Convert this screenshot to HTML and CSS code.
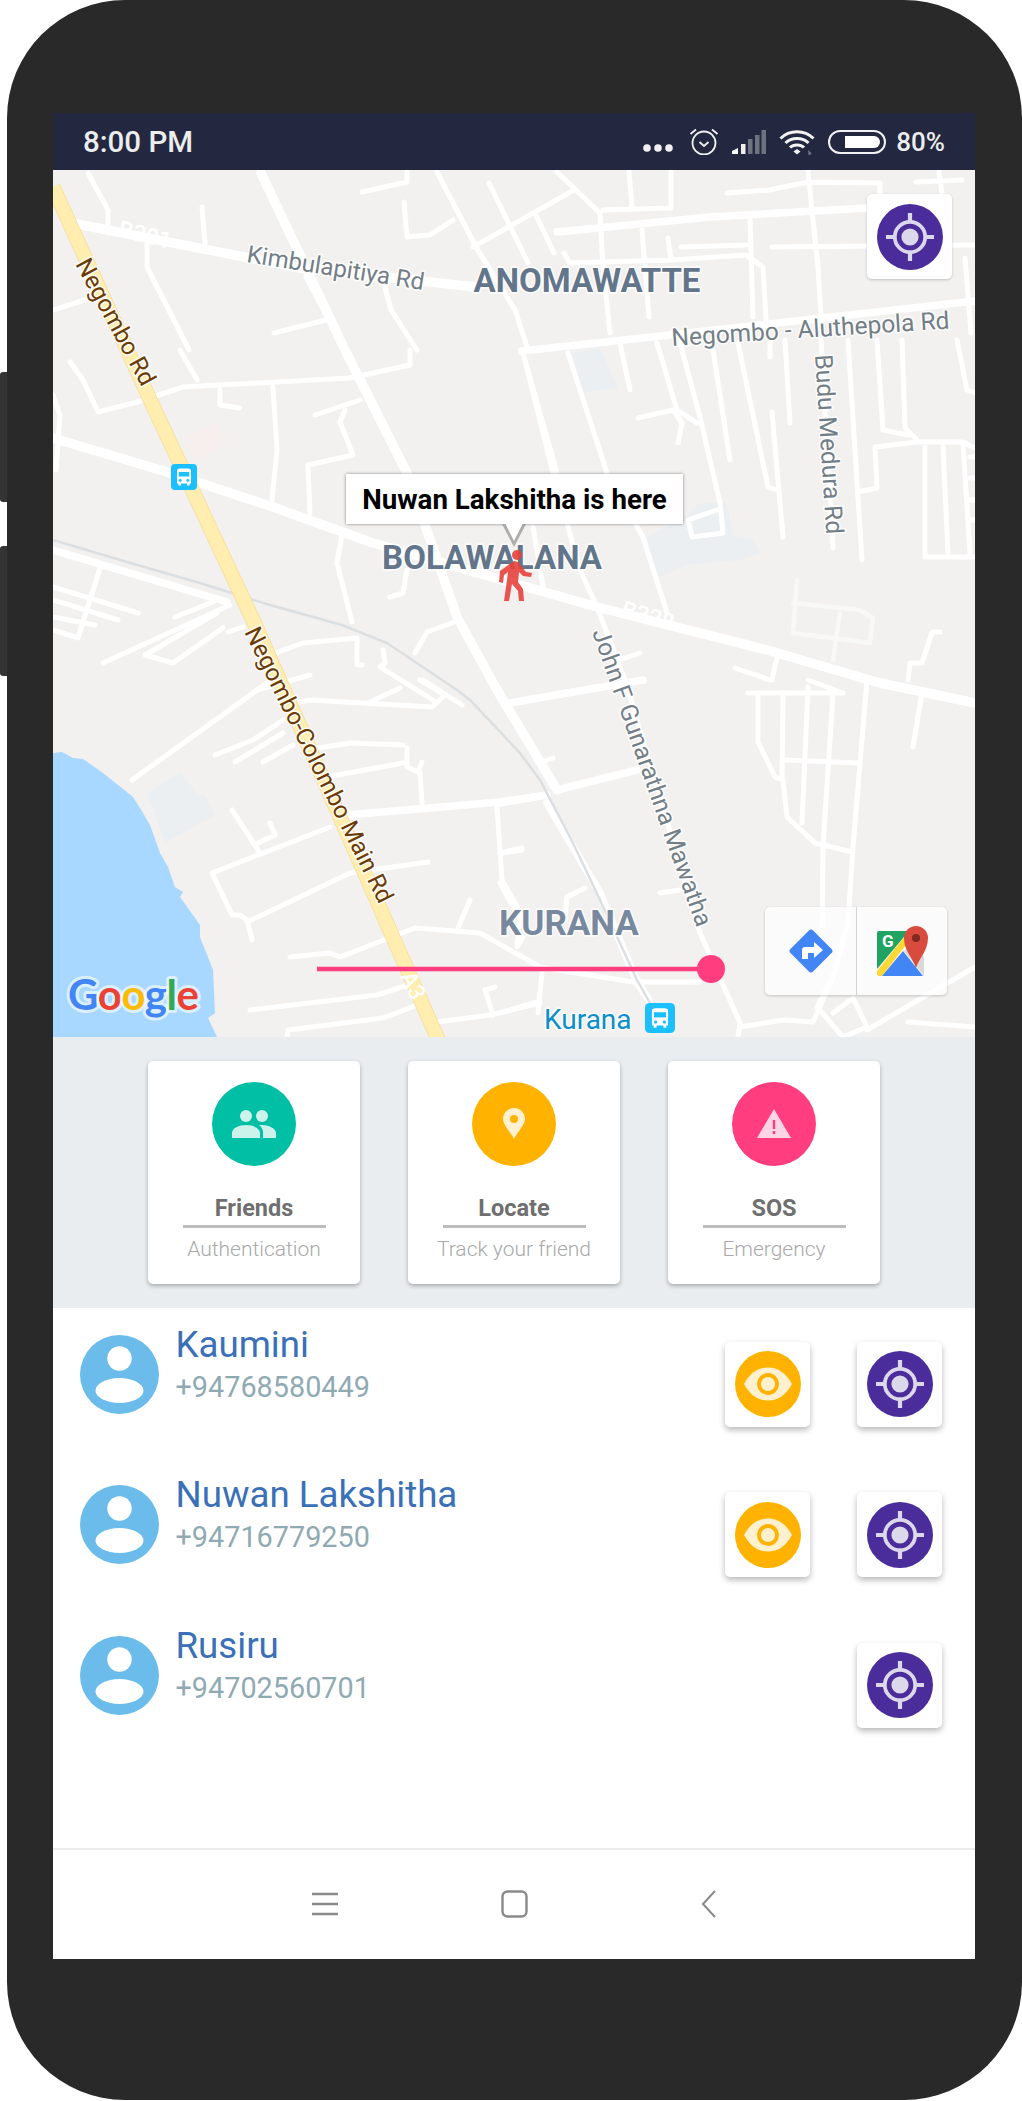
FILE: index.html
```html
<!DOCTYPE html>
<html lang="en">
<head>
<meta charset="utf-8">
<title>Friend locator</title>
<link rel="stylesheet" href="styles.css">
</head>
<body>
<svg class="defs" width="0" height="0" aria-hidden="true">
  <symbol id="target" viewBox="0 0 66 66">
    <circle cx="33" cy="33" r="33" fill="#4a2c9b"/>
    <circle cx="33" cy="33" r="15.2" fill="none" stroke="#dcd7ea" stroke-width="3.8"/>
    <circle cx="33" cy="33" r="8.6" fill="#dcd7ea"/>
    <path d="M33 9v8M33 49v8M9 33h8M49 33h8" stroke="#dcd7ea" stroke-width="4.2" fill="none"/>
  </symbol>
  <symbol id="eye" viewBox="0 0 66 66">
    <circle cx="33" cy="33" r="33" fill="#ffb300"/>
    <path d="M9 33C15 22 23 16.500 33 16.500S51 22 57 33C51 44 43 49.500 33 49.500S15 44 9 33Z" fill="#fff1cf"/>
    <circle cx="33" cy="33" r="9" fill="none" stroke="#ffb300" stroke-width="3.800"/>
  </symbol>
  <symbol id="person" viewBox="0 0 79 79">
    <circle cx="39.500" cy="39.500" r="39.500" fill="#6bbceb"/>
    <circle cx="39.500" cy="23.500" r="12.200" fill="#fff"/>
    <ellipse cx="39.500" cy="55.500" rx="24" ry="12.500" fill="#fff"/>
  </symbol>
  <symbol id="bus" viewBox="0 0 26 26">
    <rect width="26" height="26" rx="4" fill="#1cc0ff"/>
    <path d="M6 7q0-2.500 3-2.500h8q3 0 3 2.500v12.500h-1.500v2h-2.500v-2h-6v2h-2.500v-2h-1.500Z" fill="#fff"/>
    <rect x="7.800" y="8" width="10.400" height="4.500" fill="#1cc0ff"/>
    <circle cx="9.200" cy="16.500" r="1.400" fill="#1cc0ff"/>
    <circle cx="16.800" cy="16.500" r="1.400" fill="#1cc0ff"/>
  </symbol>
</svg>

<div class="phone">
  <span class="side-key side-key-top"></span>
  <span class="side-key side-key-low"></span>
  <main class="screen">
    <header class="status">
      <span class="clock">8:00 PM</span>
      <div class="status-icons">
        <svg class="st-dots" width="30" height="8" viewBox="0 0 30 8"><circle cx="4" cy="4" r="3.800"/><circle cx="15" cy="4" r="3.800"/><circle cx="26" cy="4" r="3.800"/></svg>
        <svg class="st-alarm" width="30" height="28" viewBox="0 0 30 28"><circle cx="15" cy="16" r="11.500" fill="none" stroke="#f0f0f2" stroke-width="1.800"/><path d="M10.500 15l4.500 4 4.500-4M1.500 7L7 2.500M28.500 7L23 2.500" fill="none" stroke="#f0f0f2" stroke-width="1.800"/></svg>
        <svg class="st-signal" width="34" height="24" viewBox="0 0 34 24"><path d="M0 24v-3l6-3v6Z" fill="#fff"/><rect x="9" y="14" width="4.500" height="10" fill="#eee"/><rect x="16" y="9" width="4.500" height="15" fill="#6f7280"/><rect x="23" y="5" width="4.500" height="19" fill="#6f7280"/><rect x="29.500" y="0" width="4.500" height="24" fill="#6f7280"/></svg>
        <svg class="st-wifi" width="36" height="26" viewBox="0 0 36 26"><path d="M1.500 9.500C10.500 .5 25.500 .5 34.500 9.500M6.500 14C12.500 8 23.500 8 29.500 14M11 18.500C14.500 15 21.500 15 25 18.500" fill="none" stroke="#f2f2f4" stroke-width="3"/><path d="M14.500 22.500l3.500-2.500 3.500 2.500-3.500 3Z" fill="#f2f2f4"/><path d="M29 21l4 3.500-1.500.2v2h-2Z" fill="#6f7280"/></svg>
        <span class="st-battery"><span class="st-level"></span></span>
        <span class="pct">80%</span>
      </div>
    </header>

    <section class="map">
      <svg class="map-art" viewBox="53 170 922 867" width="922" height="867">
        <path class="water" d="M53 753L62 752 73 758 83 759 103 773 133 797 143 813 150 825 160 853 168 867 175 887 183 892 180 897 200 925 200 937 213 970 215 1013 208 1018 217 1037H53Z"/>
        <path class="pale" d="M147 793L180 772 198 795 205 795 215 815 165 843Z"/>
        <path class="pale" d="M572 353L600 348 618 388 583 392Z"/>
        <path class="pale" d="M647 537L687 515 700 503 727 503 733 535 753 540 760 553 740 560 687 565 657 578Z"/>
        <path class="pink" d="M183 437L220 422 223 445 195 460Z"/>

        <g class="road r-faint">
          <path d="M797 580L793 633 870 643 873 618 860 610 793 603M840 613L833 660"/>
        </g>
        <g class="road r-thin">
          <path d="M362 192L407 182 407 172M404 202L407 237 430 235 453 220M202 207L205 243M88 173L108 210 108 233M147 243L147 267 189 350M274 333L326 320M53 310L85 300M306 277L345 350M385 287L391 310 417 350"/>
          <path d="M437 172L476 247 515 310 528 350M557 172L600 213 603 267 610 333M574 190L473 247M489 183L528 263M535 213L554 253"/>
          <path d="M629 172L632 207M671 172L671 208 603 210M727 193L769 190 808 182 880 183 880 210M808 172L818 267 821 317M750 220L753 317M642 230L649 317M668 238L671 260M681 247L746 245M564 253L570 263 671 260 746 255 763 267 766 320M772 247L975 245M916 182L962 180M939 172L942 193M965 258L971 333"/>
          <path d="M70 362L83 380 98 412 137 402 183 387 350 378 410 365 410 350M180 350L197 380M220 390L220 405 240 408M273 387L277 450 272 500M315 415L360 400M345 410L340 422 353 455 308 465 310 513M342 535L337 563 352 622M407 570L403 593 390 597"/>
          <path d="M53 395L60 415 56 470M100 568L78 638 53 630M53 587L138 613M53 600L118 620M53 617L95 625M175 617L213 602M103 663L230 605M145 655L173 663 223 628M145 655L217 613M228 632L243 627M270 655L303 643 357 638 357 665 362 665M257 690L310 675M415 653L427 632 460 620M383 650L385 663 380 667 433 700"/>
          <path d="M132 780L267 683M215 755L253 740 283 720M235 762L283 733M263 762L293 745M293 703L310 700 432 707 445 695 420 680M368 703L400 688M423 680L462 705M317 748L352 743 403 745M407 748L407 767 418 772 422 762M327 777L403 763M420 772L422 803M497 808L502 880 523 917M502 853L522 850M232 810L260 853M270 823L275 835 258 843M212 873L330 827M212 873L232 915 240 915 247 920 252 940M247 922L350 873 428 862M290 957L330 953 340 957 415 928 480 933 540 967 633 982 700 982M470 900L458 928M517 947L523 937M250 1010L377 995 417 982M287 1037L288 1030 383 1018 417 1005M437 1022L490 1015 540 1003M485 990L493 1015M485 990L495 987"/>
          <path d="M620 343L630 390M657 343L677 410 697 423M680 343L700 417 720 503 723 533 692 537 688 520 717 510M638 418L673 410 682 423 678 443M713 350L730 460M738 343L768 487 777 490M772 412L783 537M770 343L770 357M785 340L790 423M821 340L833 548M848 340L862 560M877 340L883 430 908 435M902 340L905 428 917 440M875 447L877 488 858 492M875 447L917 442 963 442 975 448M925 447L925 557 975 557M943 447L948 553M963 443L970 553M970 457H975M970 478H975M970 500H975M970 520H975M957 340L967 390 975 393M940 632L932 632 922 663 910 663 908 680M777 657L772 680M735 668L770 680M640 653L613 662"/>
          <path d="M540 763L553 758M500 853L522 848M500 883L520 920 517 943M565 920L567 897 585 888M542 973L538 1013M500 1013L537 1002M640 983L657 1013M740 1027L783 1020 813 1022 833 977M817 1007L843 1037M833 1013L853 998 867 1027 843 1037M867 1030L975 967M908 1022L975 1027M660 893L680 890M748 693L843 693M808 680L843 693M758 697L758 742 775 777 783 780 787 817 815 843 852 852M783 697L782 777M808 687L802 823M833 693L823 847 822 933M867 680L853 847 848 923 833 977 817 1007M785 760L858 763M922 693L913 747"/>
          <path d="M557 473L523 353M607 473L568 353M568 353L607 473 643 537 667 613M523 353L553 473 580 570 597 607 625 680 700 933 740 1023 738 1037"/>
          <path d="M533 527L543 587"/>
        </g>
        <g class="road r-mid">
          <path d="M53 550L227 602M557 232L710 217 867 208M510 703L567 693 643 680M557 790L637 770M500 803L547 795M347 815L500 802 547 795M547 803L600 893 637 982 657 1013"/>
          <path d="M870 680L975 702M522 351L670 335 975 301"/>
        </g>
        <g class="road r-wide">
          <path d="M72 223L300 268 476 287M261 173L345 350 407 473 457 617 497 690 557 790"/>
          <path d="M53 438L167 472 273 507 373 543 597 607 767 650 880 683 975 703"/>
        </g>
        <path class="rail" d="M53 540L127 562 200 583 270 605 342 625 387 643 457 690 470 700 520 753 540 780 573 843 600 900 637 980 650 1003"/>
        <path class="highway-edge" d="M53 187L147 393 253 620 437 1037 450 1067"/>
        <path class="highway" d="M53 187L147 393 253 620 437 1037 450 1067"/>

        <text class="shield" transform="translate(117 236) rotate(14)">B301</text>
        <text class="shield" transform="translate(620 616) rotate(16)">B328</text>
        <text class="shield" transform="translate(400 976) rotate(65)">A3</text>

        <text class="lbl-road lbl-road-short" transform="translate(246 262) rotate(9)">Kimbulapitiya Rd</text>
        <text class="lbl-road" transform="translate(672 346) rotate(-3.600)">Negombo - Aluthepola Rd</text>
        <text class="lbl-road" transform="translate(815 355) rotate(86.400)">Budu Medura Rd</text>
        <text class="lbl-road" transform="translate(592 632) rotate(70.500)">John F Gunarathna Mawatha</text>
        <text class="lbl-major" transform="translate(75 264) rotate(61.500)">Negombo Rd</text>
        <text class="lbl-major" transform="translate(244 632) rotate(63.600)">Negombo-Colombo Main Rd</text>
        <text class="lbl-area" x="587" y="292">ANOMAWATTE</text>
        <text class="lbl-area" x="492" y="569">BOLAWALANA</text>
        <text class="lbl-area lbl-area-soft" x="569" y="935">KURANA</text>
        <text class="lbl-stop" x="544" y="1029">Kurana</text>

        <use href="#bus" x="171" y="464" width="26" height="26" class="halo"/>
        <use href="#bus" x="645" y="1003" width="30" height="30" class="halo"/>

        <g class="walker">
          <circle cx="517" cy="555" r="5"/>
          <path d="M514 561l4 1 8 10 6 1-1 4-8-1-4-4-1 10 5 7 1 12h-5l-1-10-6-7-3 17h-5l3-21 1-8-4 3-1 8-4-1 1-11Z"/>
        </g>

        <text class="logo" x="68" y="1010"><tspan class="g-b">G</tspan><tspan class="g-r">o</tspan><tspan class="g-y">o</tspan><tspan class="g-b">g</tspan><tspan class="g-g">l</tspan><tspan class="g-r">e</tspan></text>

        <path class="route" d="M317 969H711"/>
        <circle class="route-dot" cx="711" cy="969" r="14"/>
      </svg>

      <div class="bubble">Nuwan Lakshitha is here</div>

      <button class="map-btn map-btn-locate" type="button"><svg width="66" height="66"><use href="#target"/></svg></button>

      <div class="map-tools">
        <span class="tool">
          <svg width="46" height="46" viewBox="0 0 46 46"><rect x="7" y="7" width="32" height="32" rx="3" transform="rotate(45 23 23)" fill="#4285f4"/><path d="M14 31v-9q0-3 3-3h9v-5l9 8-9 8v-5h-6v6Z" fill="#fff"/></svg>
        </span>
        <span class="tool">
          <svg width="52" height="52" viewBox="0 0 52 52"><path d="M1 8q0-2 2-2h30L1 44Z" fill="#1fa463"/><path d="M1 46L33 6h3v6L6 51H3q-2 0-2-2Z" fill="#fdd835"/><path d="M6 51l21-25 20 25Z" fill="#4285f4"/><path d="M28 26l8-8 12 14v19Z" fill="#d9d9d9"/><text class="maps-g" x="6" y="22">G</text><path d="M40 43C37 33 28 26 28 13a12 12 0 0 1 24 0C52 26 43 33 40 43Z" fill="#d94c3d"/><circle cx="40" cy="13" r="4" fill="#7f2a1f"/></svg>
        </span>
      </div>
    </section>

    <section class="panel">
      <article class="card">
        <svg class="card-ico" width="84" height="84" viewBox="0 0 84 84"><circle cx="42" cy="42" r="42" fill="#00bfa5"/><g fill="#ccf2ec"><ellipse cx="34" cy="34" rx="6" ry="6"/><ellipse cx="50" cy="34" rx="6" ry="6"/><path d="M20 56v-5c0-5 7-8 14-8s14 3 14 8v5Z"/><path d="M50 43c6 0 14 3 14 8v5H51v-5c0-3-1-6-4-8Z"/></g></svg>
        <h2 class="card-title">Friends</h2>
        <p class="card-sub">Authentication</p>
      </article>
      <article class="card">
        <svg class="card-ico" width="84" height="84" viewBox="0 0 84 84"><circle cx="42" cy="42" r="42" fill="#ffb300"/><path d="M42 57C38 49 31 43 31 37a11 11 0 0 1 22 0C53 43 46 49 42 57Z" fill="#fff1cf"/><circle cx="42" cy="37" r="4" fill="#ffb300"/></svg>
        <h2 class="card-title">Locate</h2>
        <p class="card-sub">Track your friend</p>
      </article>
      <article class="card">
        <svg class="card-ico" width="84" height="84" viewBox="0 0 84 84"><circle cx="42" cy="42" r="42" fill="#ff3d7f"/><path d="M42 27L59 56H25Z" fill="#ffd5e5"/><path d="M40.800 38h2.400v9h-2.400ZM40.800 49h2.400v3h-2.400Z" fill="#ff3d7f"/></svg>
        <h2 class="card-title">SOS</h2>
        <p class="card-sub">Emergency</p>
      </article>
    </section>

    <section class="contacts">
      <div class="contact">
        <svg class="avatar" width="79" height="79"><use href="#person"/></svg>
        <div class="who"><div class="name">Kaumini</div><div class="phone-no">+94768580449</div></div>
        <div class="actions">
          <button class="map-btn" type="button"><svg width="66" height="66"><use href="#eye"/></svg></button>
          <button class="map-btn" type="button"><svg width="66" height="66"><use href="#target"/></svg></button>
        </div>
      </div>
      <div class="contact">
        <svg class="avatar" width="79" height="79"><use href="#person"/></svg>
        <div class="who"><div class="name">Nuwan Lakshitha</div><div class="phone-no">+94716779250</div></div>
        <div class="actions">
          <button class="map-btn" type="button"><svg width="66" height="66"><use href="#eye"/></svg></button>
          <button class="map-btn" type="button"><svg width="66" height="66"><use href="#target"/></svg></button>
        </div>
      </div>
      <div class="contact">
        <svg class="avatar" width="79" height="79"><use href="#person"/></svg>
        <div class="who"><div class="name">Rusiru</div><div class="phone-no">+94702560701</div></div>
        <div class="actions">
          <button class="map-btn" type="button"><svg width="66" height="66"><use href="#target"/></svg></button>
        </div>
      </div>
    </section>

    <nav class="softkeys">
      <svg width="26" height="24" viewBox="0 0 26 24"><path d="M0 2h26M0 12h26M0 22h26" stroke="#8a8a8a" stroke-width="2.600" fill="none"/></svg>
      <svg width="27" height="28" viewBox="0 0 27 28"><rect x="1.500" y="1.500" width="24" height="25" rx="5" fill="none" stroke="#8a8a8a" stroke-width="2.400"/></svg>
      <svg class="key-back" width="15" height="28" viewBox="0 0 15 28"><path d="M14 1L2 14l12 13" stroke="#8a8a8a" stroke-width="2" fill="none"/></svg>
    </nav>
  </main>
</div>
</body>
</html>
```

FILE: styles.css
```css
* { box-sizing: border-box; }
html, body { margin: 0; padding: 0; background: #fff; }
body { font-family: Roboto, "Liberation Sans", sans-serif; width: 1022px; height: 2101px; overflow: hidden; }
.defs { position: absolute; }

.phone {
  position: relative;
  margin-left: 7px;
  width: 1015px;
  height: 2100px;
  padding: 113px 47px 141px 46px;
  background: #292929;
  border-radius: 118px;
}
.side-key { position: absolute; left: -7px; width: 7px; height: 130px; background: #333; border-radius: 3px 0 0 3px; }
.side-key-top { top: 372px; }
.side-key-low { top: 546px; }

.screen { display: flex; flex-direction: column; width: 922px; height: 1846px; background: #fff; }

.status { display: flex; justify-content: space-between; align-items: center; height: 57px; padding: 0 30px; background: #232840; color: #eceded; flex: none; }
.clock { font-size: 29.500px; font-weight: 500; }
.status-icons { display: flex; align-items: center; }
.pct { font-size: 26px; font-weight: 500; margin-left: 10px; }
.status-icons svg { display: block; }
.st-dots { fill: #f0f0f2; margin: 12px 16px 0 0; }
.st-alarm { margin-bottom: 2px; margin-right: 13px; }
.st-signal { margin-right: 13px; }
.st-wifi { margin-right: 13px; }
.st-battery { display: block; width: 58px; height: 24px; padding: 4px 4px 4px 15px; border: 2.500px solid #f2f2f4; border-radius: 12px; }
.st-level { display: block; height: 100%; background: #fff; border-radius: 0 8px 8px 0; }

.map { position: relative; height: 867px; flex: none; overflow: hidden; background: #f2f1ef; }
.map-art { display: block; }
.water { fill: #a8d8ff; }
.pale { fill: #ebeff2; }
.pink { fill: #f6efee; }
.road { fill: none; stroke: #fff; stroke-linecap: round; stroke-linejoin: round; }
.r-faint { stroke: #f8f8f7; stroke-width: 4.500; }
.r-thin { stroke-width: 5; }
.r-mid { stroke-width: 7.500; }
.r-wide { stroke-width: 9.500; }
.rail { fill: none; stroke: #dcdfe2; stroke-width: 2.500; }
.highway-edge { fill: none; stroke: #f7dc95; stroke-width: 15; }
.highway { fill: none; stroke: #ffeeb0; stroke-width: 13.500; }

.map-art text { font-family: Roboto, "Liberation Sans", sans-serif; paint-order: stroke; stroke-linejoin: round; }
.shield { font-size: 23px; font-weight: 500; fill: #fff; }
.lbl-road { font-size: 24.500px; fill: #737e86; stroke: rgba(255,255,255,.85); stroke-width: 3px; }
.lbl-road-short { font-size: 24px; }
.lbl-major { font-size: 24.200px; fill: #6a3a05; stroke: rgba(255,255,255,.85); stroke-width: 3px; }
.lbl-area { font-size: 33px; font-weight: 700; fill: #62758a; text-anchor: middle; stroke: rgba(255,255,255,.85); stroke-width: 3px; }
.lbl-area-soft { font-size: 35px; fill: #78899f; }
.lbl-stop { font-size: 28px; fill: #0a8fc9; stroke: rgba(255,255,255,.85); stroke-width: 3px; }
.walker { fill: #e9423d; opacity: .9; }
.logo { font-size: 42px; font-weight: 700; stroke: rgba(255,255,255,.6); stroke-width: 6px; letter-spacing: -.5px; }
.map-art .logo { font-family: Lato, Roboto, sans-serif; }
.g-b { fill: #4285f4; }
.g-r { fill: #ea4335; }
.g-y { fill: #fbbc05; }
.g-g { fill: #34a853; }
.route { fill: none; stroke: #ff3d7f; stroke-width: 4.500; }
.route-dot { fill: #ff3d7f; }
.maps-g { font-size: 17px; font-weight: 700; fill: #fff; }

.bubble { position: absolute; left: 293px; top: 304px; width: 337px; height: 50px; display: flex; align-items: center; justify-content: center; background: #fff; color: #000; font-size: 27.700px; font-weight: 700; box-shadow: 0 0 3px rgba(0,0,0,.45); }
.bubble::before { content: ""; position: absolute; left: 156px; top: 50px; border-left: 12px solid transparent; border-right: 12px solid transparent; border-top: 23px solid rgba(150,150,150,.75); }
.bubble::after { content: ""; position: absolute; left: 159px; top: 49px; border-left: 9px solid transparent; border-right: 9px solid transparent; border-top: 18px solid #fff; }

.map-btn { display: flex; align-items: center; justify-content: center; width: 85px; height: 85px; padding: 0; border: 0; border-radius: 5px; background: #fff; box-shadow: 0 3px 6px rgba(0,0,0,.28); }
.map-btn svg { display: block; }
.map-btn-locate { position: absolute; left: 814px; top: 24px; box-shadow: 0 1px 3px rgba(0,0,0,.2); }

.map-tools { position: absolute; left: 712px; top: 737px; display: flex; height: 88px; border-radius: 5px; background: rgba(255,255,255,.72); box-shadow: 0 1px 3px rgba(0,0,0,.2); }
.tool { display: flex; align-items: center; justify-content: center; width: 91px; }
.tool + .tool { border-left: 1px solid #d4d4d4; }

.panel { display: flex; justify-content: center; gap: 48px; height: 271px; padding-top: 24px; background: #e9edf0; flex: none; }
.card { display: flex; flex-direction: column; align-items: center; width: 212px; height: 223px; padding-top: 21px; background: #fff; border-radius: 5px; box-shadow: 0 2px 4px rgba(0,0,0,.28); }
.card-ico { display: block; }
.card-title { width: 143px; margin: 28px 0 0; padding-bottom: 3px; border-bottom: 3px solid #bdbdbd; color: #6f6f6f; font-size: 23.500px; line-height: 28px; font-weight: 700; text-align: center; }
.card-sub { margin: 6px 0 0; color: #a9a9a9; font-size: 21px; line-height: 30px; text-align: center; white-space: nowrap; font-weight: 300; }

.contacts { display: flex; flex-direction: column; gap: 18.500px; flex: 1; }
.contact { display: flex; align-items: center; height: 132px; padding: 0 33px 0 26.500px; flex: none; }
.avatar { display: block; flex: none; }
.who { margin-left: 17px; margin-top: -20px; }
.name { color: #3a70b8; font-size: 36.700px; line-height: 40px; }
.phone-no { margin-top: 5px; color: #90aab3; font-size: 28.800px; line-height: 34px; }
.actions { display: flex; gap: 47px; margin-left: auto; padding-top: 20px; }

.softkeys { display: flex; justify-content: center; align-items: center; gap: 163px; height: 111px; border-top: 2px solid #ececec; padding-bottom: 34px; padding-top: 33px; flex: none; }
.key-back { margin-left: 10px; }
```
